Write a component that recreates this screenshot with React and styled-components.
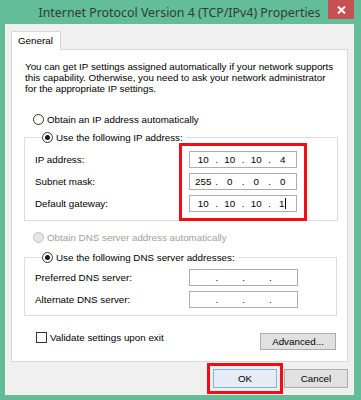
import React from 'react';
import styled, { createGlobalStyle } from 'styled-components';

const GlobalStyle = createGlobalStyle`
  html, body {
    margin: 0;
    padding: 0;
  }
  body {
    background: #62bd98;
    font-family: "Liberation Sans", Arial, sans-serif;
  }
`;

const Window = styled.div`
  width: 361px;
  height: 400px;
  box-sizing: border-box;
  padding: 0 7px 6px 5px;
  display: flex;
  flex-direction: column;
  background: #62bd98;
`;

const TitleBar = styled.div`
  height: 24px;
  display: flex;
  flex: none;
`;

const Title = styled.div`
  flex: 1;
  padding-left: 26px;
  text-align: center;
  line-height: 25px;
  font-family: "Noto Sans", "Open Sans", sans-serif;
  font-size: 12.4px;
  color: #333b38;
  white-space: nowrap;
`;

const CloseButton = styled.div`
  width: 26px;
  height: 19px;
  background: #c75050;
  display: flex;
  align-items: center;
  justify-content: center;
`;

const Client = styled.div`
  flex: 1;
  background: #f0f0f0;
  padding: 7px 6px 6px 6px;
  display: flex;
  flex-direction: column;
  font-size: 9.8px;
  color: #000;
`;

const TabStrip = styled.div`
  display: flex;
  height: 18px;
`;

const Tab = styled.div`
  position: relative;
  z-index: 1;
  height: 19px;
  box-sizing: border-box;
  padding: 0 7px 0 6px;
  line-height: 18px;
  background: #fff;
  border: 1px solid #d9d9d9;
  border-bottom: none;
`;

const Panel = styled.div`
  height: 313px;
  box-sizing: border-box;
  background: #fff;
  border: 1px solid #d9d9d9;
  padding: 11px 9px 0 12px;
  display: flex;
  flex-direction: column;
`;

const Intro = styled.p`
  margin: 0 0 0 1px;
  line-height: 11px;
  white-space: nowrap;
`;

const RadioRow = styled.label`
  display: flex;
  align-items: center;
  gap: 3px;
  height: 13px;
  margin-top: ${p => p.$top || 0}px;
  padding-left: ${p => p.$indent || 0}px;
  color: ${p => (p.$disabled ? '#a0a0a0' : '#000')};
`;

const Radio = styled.span`
  width: 11px;
  height: 11px;
  box-sizing: border-box;
  border-radius: 50%;
  border: 1px solid ${p => (p.$disabled ? '#c2c2c2' : '#333')};
  background: ${p => (p.$disabled ? '#e6e6e6' : '#fff')};
  display: flex;
  align-items: center;
  justify-content: center;

  &::after {
    content: '';
    display: ${p => (p.$checked ? 'block' : 'none')};
    width: 5px;
    height: 5px;
    border-radius: 50%;
    background: #1a1a1a;
  }
`;

const Group = styled.div`
  margin-top: ${p => p.$top}px;
  margin-right: ${p => p.$right || 0}px;
  border: 1px solid #dcdcdc;
  padding: 0 0 ${p => p.$bottom}px 10px;
`;

const Legend = styled.div`
  margin-top: -7px;
  margin-left: 7px;
  width: fit-content;
  padding-right: 3px;
  background: #fff;
`;

const GroupBody = styled.div`
  display: flex;
  margin-top: ${p => p.$top}px;
  padding-right: ${p => p.$right}px;
`;

const Column = styled.div`
  display: flex;
  flex-direction: column;
  gap: ${p => p.$gap}px;
`;

const Labels = styled(Column)`
  flex: 1;
`;

const Label = styled.div`
  height: ${p => p.$h}px;
  display: flex;
  align-items: center;
`;

const Mark = styled.div`
  border: 3px solid #f20d12;
`;

const FieldsMark = styled(Mark)`
  padding: 5px 7px 6px;
  margin: -8px -10px -9px;
`;

const ButtonMark = styled(Mark)`
  padding: 3px;
  margin: -6px -6px -5px;
  display: flex;
`;

const IpBox = styled.div`
  width: ${p => p.$w}px;
  height: ${p => p.$h}px;
  box-sizing: border-box;
  border: 1px solid #abadb3;
  background: #fff;
  display: flex;
  align-items: center;
`;

const Octet = styled.span`
  flex: 1;
  text-align: center;
  white-space: nowrap;
`;

const Dot = styled.span`
  width: 0;
  display: flex;
  justify-content: center;
`;

const Caret = styled.span`
  display: inline-block;
  width: 1px;
  height: 11px;
  margin-left: 1px;
  vertical-align: -2px;
  background: #000;
`;

const BottomRow = styled.div`
  margin-top: 16px;
  padding: 0 2px 0 12px;
  display: flex;
  align-items: flex-start;
  justify-content: space-between;
`;

const CheckRow = styled.label`
  display: flex;
  align-items: center;
  gap: 3px;
`;

const Checkbox = styled.span`
  width: 11px;
  height: 11px;
  box-sizing: border-box;
  border: 1px solid #333;
  background: #fff;
`;

const Button = styled.div`
  width: ${p => p.$w}px;
  height: ${p => p.$h}px;
  margin-top: ${p => p.$top || 0}px;
  box-sizing: border-box;
  border: 1px solid ${p => (p.$default ? '#7eb4ea' : '#adadad')};
  background: ${p => (p.$default ? '#e5ecf5' : '#e1e1e1')};
  display: flex;
  align-items: center;
  justify-content: center;
`;

const Footer = styled.div`
  margin-top: 7px;
  display: flex;
  justify-content: flex-end;
  gap: 7px;
`;

const IpField = ({ value = ['', '', '', ''], w = 108, h = 17, caret }) => (
  <IpBox $w={w} $h={h}>
    {value.map((v, i) => (
      <React.Fragment key={i}>
        {i > 0 && <Dot>.</Dot>}
        <Octet>
          {v}
          {caret && i === 3 && <Caret />}
        </Octet>
      </React.Fragment>
    ))}
  </IpBox>
);

export default function App() {
  return (
    <>
      <GlobalStyle />
      <Window>
        <TitleBar>
          <Title>Internet Protocol Version 4 (TCP/IPv4) Properties</Title>
          <CloseButton>
            <svg width="9" height="8" viewBox="0 0 9 8">
              <path d="M1 0.5 L8 7.5 M8 0.5 L1 7.5" stroke="#fff" strokeWidth="2" />
            </svg>
          </CloseButton>
        </TitleBar>
        <Client>
          <TabStrip>
            <Tab>General</Tab>
          </TabStrip>
          <Panel>
            <Intro>
              You can get IP settings assigned automatically if your network supports
              <br />
              this capability. Otherwise, you need to ask your network administrator
              <br />
              for the appropriate IP settings.
            </Intro>
            <RadioRow $top={19} $indent={9}>
              <Radio />
              Obtain an IP address automatically
            </RadioRow>

            <Group $top={11} $bottom={8}>
              <Legend>
                <RadioRow>
                  <Radio $checked />
                  Use the following IP address:
                </RadioRow>
              </Legend>
              <GroupBody $top={7} $right={40}>
                <Labels $gap={5}>
                  <Label $h={17}>IP address:</Label>
                  <Label $h={17}>Subnet mask:</Label>
                  <Label $h={17}>Default gateway:</Label>
                </Labels>
                <FieldsMark>
                  <Column $gap={5}>
                    <IpField value={['10', '10', '10', '4']} />
                    <IpField value={['255', '0', '0', '0']} />
                    <IpField value={['10', '10', '10', '1']} caret />
                  </Column>
                </FieldsMark>
              </GroupBody>
            </Group>

            <RadioRow $top={10} $indent={9} $disabled>
              <Radio $disabled />
              Obtain DNS server address automatically
            </RadioRow>

            <Group $top={13} $bottom={7} $right={1}>
              <Legend>
                <RadioRow>
                  <Radio $checked />
                  Use the following DNS server addresses:
                </RadioRow>
              </Legend>
              <GroupBody $top={5} $right={38}>
                <Labels $gap={5}>
                  <Label $h={17}>Preferred DNS server:</Label>
                  <Label $h={17}>Alternate DNS server:</Label>
                </Labels>
                <Column $gap={5}>
                  <IpField w={109} />
                  <IpField w={109} />
                </Column>
              </GroupBody>
            </Group>

            <BottomRow>
              <CheckRow>
                <Checkbox />
                Validate settings upon exit
              </CheckRow>
              <Button $w={76} $h={17} $top={1}>Advanced...</Button>
            </BottomRow>
          </Panel>
          <Footer>
            <ButtonMark>
              <Button $w={64} $h={19} $default>OK</Button>
            </ButtonMark>
            <Button $w={64} $h={19}>Cancel</Button>
          </Footer>
        </Client>
      </Window>
    </>
  );
}
